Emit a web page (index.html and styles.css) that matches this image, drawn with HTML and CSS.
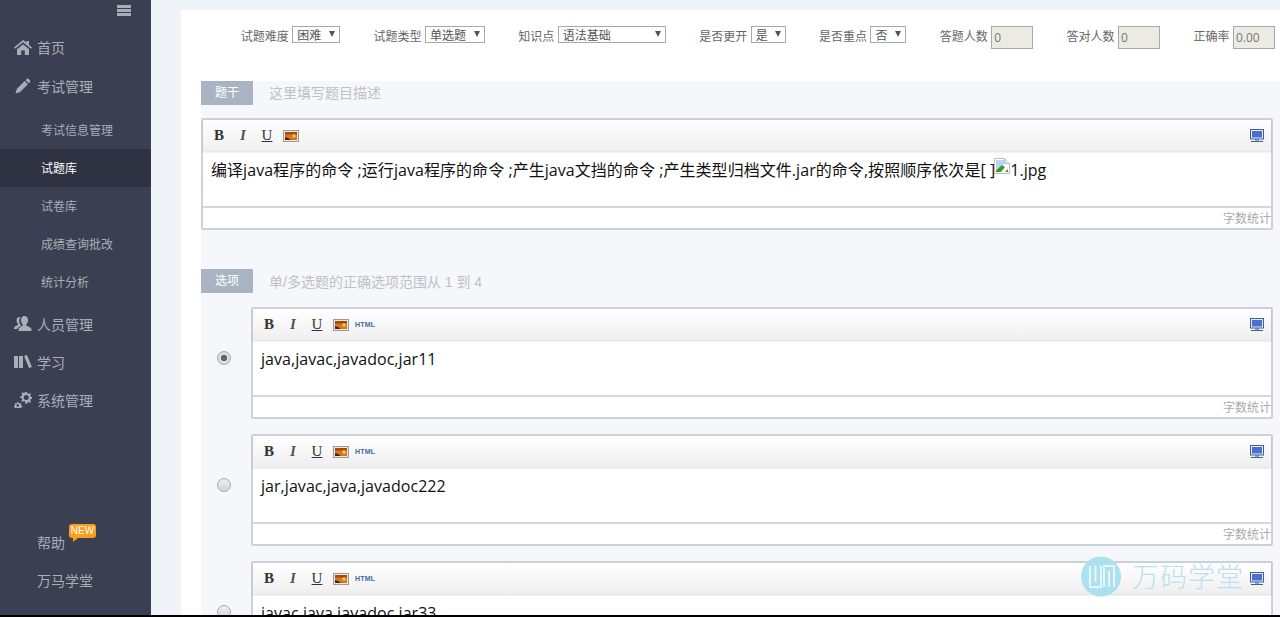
FILE: index.html
```html
<!DOCTYPE html>
<html lang="zh-CN">
<head>
  <meta charset="UTF-8">
  <title>试题库</title>
  <link rel="stylesheet" href="styles.css">
</head>
<body>
  <div class="app">
    <aside class="sidebar">
      <div class="toggle"><span></span><span></span><span></span></div>
      <nav class="nav">
        <a class="nav-item">
          <svg class="nav-icon" viewBox="0 0 18 16"><path d="M9 1 0 8.600l1 1.200L9 3.200l8 6.600 1-1.200-3-2.500V2h-2.400v1.600z"/><path d="M3 10.200 9 5.200l6 5V16h-4.200v-4.400H7.200V16H3z"/></svg>
          首页
        </a>
        <a class="nav-item gap">
          <svg class="nav-icon" viewBox="0 0 18 18"><path d="M13.200 1.200c.7-.7 1.600-.7 2.200-.1l1.400 1.400c.6.6.6 1.500-.1 2.200l-1.300 1.300-3.500-3.500zM10.900 3.500l3.500 3.500-8.900 9L.5 17.500 2 12.400z"/></svg>
          考试管理
        </a>
        <div class="subnav">
          <a class="sub-item">考试信息管理</a>
          <a class="sub-item active">试题库</a>
          <a class="sub-item">试卷库</a>
          <a class="sub-item">成绩查询批改</a>
          <a class="sub-item">统计分析</a>
        </div>
        <a class="nav-item">
          <svg class="nav-icon" viewBox="0 0 18 16"><path d="M10.500 0c2.300 0 3.600 1.700 3.600 4 0 1.800-.8 3.400-1.800 4.400v1.300c1.800.7 5.200 1.800 5.200 3.500V15H4.500v-1.800c0-1.700 2.500-2.800 4.200-3.500V8.400C7.700 7.400 7 5.800 7 4c0-2.300 1.200-4 3.500-4z"/><path d="M5.500 1c-1.900 0-3 1.400-3 3.300 0 1.500.6 2.800 1.500 3.600v1.100C2.600 9.600 0 10.400 0 11.900V13h3.200c.5-1.300 2-2.200 3.600-2.900V9C5.600 7.800 5 5.900 5.300 3.900 5.500 2.800 5.800 1.800 6.500 1.100z"/></svg>
          人员管理
        </a>
        <a class="nav-item">
          <svg class="nav-icon" viewBox="0 0 18 14"><path d="M0 1h4v12H0zM5 1h4v12H5zM10 1l3-1 5 12-3 1z"/></svg>
          学习
        </a>
        <a class="nav-item">
          <svg class="nav-icon" viewBox="0 0 18 16"><path fill-rule="evenodd" d="M11.300 0h1.800l.3 1.400 1.200.5 1.200-.8 1.200 1.200-.8 1.200.5 1.200 1.400.3v1.800l-1.400.3-.5 1.200.8 1.200-1.200 1.200-1.200-.8-1.200.5-.3 1.400h-1.800L11 9.600 9.800 9.100l-1.200.8-1.200-1.200.8-1.200-.5-1.200-1.400-.3V4.200l1.400-.3.5-1.200-.8-1.200L8.600.3l1.200.8L11 .6zM12.200 3a2.500 2.500 0 1 0 0 5 2.500 2.500 0 0 0 0-5z"/><path fill-rule="evenodd" d="M3 10h1.500l.2 1 .9.400.9-.5.9.9-.5.9.4.9 1 .2v1.300l-1 .2-.2.700H1l-.2-.7-1-.2v-1.300l1-.2.400-.9-.5-.9.9-.9.9.5.9-.4zM3.700 12.200a1.300 1.300 0 1 0 0 2.600 1.300 1.300 0 0 0 0-2.600z"/></svg>
          系统管理
        </a>
      </nav>
      <div class="nav-bottom">
        <a class="nav-item plain">帮助<span class="badge">NEW</span></a>
        <a class="nav-item plain">万马学堂</a>
      </div>
    </aside>

    <main class="main">
      <div class="panel">
        <form class="filters">
          <label class="field">试题难度<span class="select w48">困难</span></label>
          <label class="field">试题类型<span class="select w60">单选题</span></label>
          <label class="field">知识点<span class="select w108">语法基础</span></label>
          <label class="field">是否更开<span class="select w35">是</span></label>
          <label class="field">是否重点<span class="select w36">否</span></label>
          <label class="field">答题人数<span class="readonly">0</span></label>
          <label class="field">答对人数<span class="readonly">0</span></label>
          <label class="field">正确率<span class="readonly">0.00</span></label>
        </form>

        <section class="body">
          <div class="heading"><span class="tag">题干</span><span class="hint">这里填写题目描述</span></div>
          <div class="editor">
            <div class="toolbar">
              <span class="tool bold">B</span><span class="tool italic">I</span><span class="tool under">U</span>
              <span class="tool"><svg class="pic" viewBox="0 0 16 12"><rect x=".5" y=".5" width="15" height="11" fill="#e8e8e8" stroke="#999"/><rect x="2" y="2" width="12" height="8" fill="#d9751c"/><rect x="2" y="2" width="12" height="2.500" fill="#a8480f"/><circle cx="11" cy="6" r="1.800" fill="#f7c54b"/><path d="M2 10V7l3 1 3 2z" fill="#3c2a18"/></svg></span>
              <svg class="monitor" viewBox="0 0 14 13"><rect x=".5" y=".5" width="13" height="9.500" fill="#e6ecf6" stroke="#3d5f94"/><rect x="2" y="2" width="10" height="6.500" fill="#4a6fd0"/><path d="M5 10.500h4v1H5zM1 12h12v1H1z" fill="#3d5f94"/></svg>
            </div>
            <div class="content">编译java程序的命令 ;运行java程序的命令 ;产生java文挡的命令 ;产生类型归档文件.jar的命令,按照顺序依次是[ ]<svg class="broken" viewBox="0 0 16 16"><path d="M.5.500h10l5 5v10H.5z" fill="#fff" stroke="#b8c0cc"/><path d="M10.500.500v5h5" fill="#e4e9f0" stroke="#b8c0cc"/><path d="M2 2h8v4l-8 5z" fill="#bcd2f2"/><path d="M2 14v-2l6-5 3 2-4 5z" fill="#3f9a2c"/><path d="M11 14l3-3v3z" fill="#3f9a2c"/></svg>1.jpg</div>
            <div class="status">字数统计</div>
          </div>

          <div class="heading second"><span class="tag">选项</span><span class="hint">单/多选题的正确选项范围从 1 到 4</span></div>

          <div class="option">
            <span class="radio checked"></span>
            <div class="editor">
              <div class="toolbar">
                <span class="tool bold">B</span><span class="tool italic">I</span><span class="tool under">U</span>
                <span class="tool"><svg class="pic" viewBox="0 0 16 12"><rect x=".5" y=".5" width="15" height="11" fill="#e8e8e8" stroke="#999"/><rect x="2" y="2" width="12" height="8" fill="#d9751c"/><rect x="2" y="2" width="12" height="2.500" fill="#a8480f"/><circle cx="11" cy="6" r="1.800" fill="#f7c54b"/><path d="M2 10V7l3 1 3 2z" fill="#3c2a18"/></svg></span>
                <span class="html">HTML</span>
                <svg class="monitor" viewBox="0 0 14 13"><rect x=".5" y=".5" width="13" height="9.500" fill="#e6ecf6" stroke="#3d5f94"/><rect x="2" y="2" width="10" height="6.500" fill="#4a6fd0"/><path d="M5 10.500h4v1H5zM1 12h12v1H1z" fill="#3d5f94"/></svg>
              </div>
              <div class="content">java,javac,javadoc,jar11</div>
              <div class="status">字数统计</div>
            </div>
          </div>

          <div class="option">
            <span class="radio"></span>
            <div class="editor">
              <div class="toolbar">
                <span class="tool bold">B</span><span class="tool italic">I</span><span class="tool under">U</span>
                <span class="tool"><svg class="pic" viewBox="0 0 16 12"><rect x=".5" y=".5" width="15" height="11" fill="#e8e8e8" stroke="#999"/><rect x="2" y="2" width="12" height="8" fill="#d9751c"/><rect x="2" y="2" width="12" height="2.500" fill="#a8480f"/><circle cx="11" cy="6" r="1.800" fill="#f7c54b"/><path d="M2 10V7l3 1 3 2z" fill="#3c2a18"/></svg></span>
                <span class="html">HTML</span>
                <svg class="monitor" viewBox="0 0 14 13"><rect x=".5" y=".5" width="13" height="9.500" fill="#e6ecf6" stroke="#3d5f94"/><rect x="2" y="2" width="10" height="6.500" fill="#4a6fd0"/><path d="M5 10.500h4v1H5zM1 12h12v1H1z" fill="#3d5f94"/></svg>
              </div>
              <div class="content">jar,javac,java,javadoc222</div>
              <div class="status">字数统计</div>
            </div>
          </div>

          <div class="option">
            <span class="radio"></span>
            <div class="editor">
              <div class="toolbar">
                <span class="tool bold">B</span><span class="tool italic">I</span><span class="tool under">U</span>
                <span class="tool"><svg class="pic" viewBox="0 0 16 12"><rect x=".5" y=".5" width="15" height="11" fill="#e8e8e8" stroke="#999"/><rect x="2" y="2" width="12" height="8" fill="#d9751c"/><rect x="2" y="2" width="12" height="2.500" fill="#a8480f"/><circle cx="11" cy="6" r="1.800" fill="#f7c54b"/><path d="M2 10V7l3 1 3 2z" fill="#3c2a18"/></svg></span>
                <span class="html">HTML</span>
                <svg class="monitor" viewBox="0 0 14 13"><rect x=".5" y=".5" width="13" height="9.500" fill="#e6ecf6" stroke="#3d5f94"/><rect x="2" y="2" width="10" height="6.500" fill="#4a6fd0"/><path d="M5 10.500h4v1H5zM1 12h12v1H1z" fill="#3d5f94"/></svg>
              </div>
              <div class="content">javac,java,javadoc,jar33</div>
              <div class="status">字数统计</div>
            </div>
          </div>
        </section>
      </div>
    </main>

    <div class="watermark">
      <svg class="wm-logo" viewBox="0 0 40 41"><circle cx="20" cy="20.500" r="20" fill="#a9e0f0"/><path d="M9 10v21h11V10M14.500 10v16M23 31V10h10v21M28 15v16" fill="none" stroke="#e6f6fb" stroke-width="2"/></svg>
      <span class="wm-text">万码学堂</span>
    </div>
  </div>
</body>
</html>
```

FILE: styles.css
```css
* { box-sizing: border-box; margin: 0; padding: 0; }

html, body {
  height: 617px;
  overflow: hidden;
}

body {
  background: #000;
  font-family: "Open Sans", "Noto Sans CJK SC", sans-serif;
  font-size: 12px;
  color: #333;
}

.app {
  position: relative;
  display: flex;
  height: 615px;
  overflow: hidden;
  background: #f0f3f8;
}

/* 左侧导航 */
.sidebar {
  flex: 0 0 151px;
  display: flex;
  flex-direction: column;
  background: #3a3f51;
  color: #abaeb7;
}

.toggle {
  display: flex;
  flex-direction: column;
  gap: 1px;
  width: 14px;
  height: 28px;
  margin-left: 117px;
  padding-top: 5px;
}
.toggle span {
  display: block;
  height: 3px;
  background: #a9acb5;
}

.nav-item {
  display: flex;
  align-items: center;
  height: 38px;
  padding-left: 37px;
  position: relative;
  font-size: 14px;
}
.nav-item.gap { margin-top: 1px; }
.nav-icon {
  position: absolute;
  left: 14px;
  top: 11px;
  width: 18px;
  height: 16px;
  fill: #abaeb7;
}

.subnav { padding: 6px 0 4px; }
.sub-item {
  display: flex;
  align-items: center;
  height: 38px;
  padding-left: 41px;
  font-size: 12px;
}
.sub-item.active {
  background: #2f3241;
  color: #fff;
}

.nav-bottom {
  margin-top: auto;
  padding-bottom: 16px;
}

.badge {
  position: absolute;
  left: 69px;
  top: 1px;
  width: 27px;
  height: 14px;
  border-radius: 3px;
  background: #fb9e1c;
  color: #fff;
  font-family: "Liberation Sans", sans-serif;
  font-size: 10px;
  line-height: 14px;
  text-align: center;
}
.badge::after {
  content: "";
  position: absolute;
  left: 4px;
  top: 14px;
  border-top: 4px solid #fb9e1c;
  border-right: 5px solid transparent;
}

/* 主体 */
.main {
  flex: 1;
  padding: 10px 0 0 30px;
}
.panel {
  height: 100%;
  background: #fff;
}

.filters {
  display: flex;
  align-items: flex-start;
  gap: 33.300px;
  height: 71px;
  padding: 16px 0 0 59.700px;
}
.field {
  display: flex;
  align-items: flex-start;
  gap: 3.500px;
  line-height: 21px;
  color: #666;
  white-space: nowrap;
}
.select {
  position: relative;
  display: block;
  height: 17px;
  padding-left: 4px;
  border: 1px solid #a9a9a9;
  background: #fff;
  line-height: 17px;
  color: #555;
}
.select::after {
  content: "";
  position: absolute;
  right: 4px;
  top: 4px;
  border-top: 6px solid #555;
  border-left: 3px solid transparent;
  border-right: 3px solid transparent;
}
.w48 { width: 48px; }
.w60 { width: 60px; }
.w108 { width: 108px; }
.w35 { width: 35px; }
.w36 { width: 36px; }

.readonly {
  display: block;
  width: 42px;
  height: 23px;
  padding-left: 2px;
  border: 1px solid #a9a9a9;
  background: #ebebe4;
  line-height: 21px;
  color: #777;
}

.body {
  height: 100%;
  margin-left: 20px;
  background: #f5f7fb;
}

.heading {
  display: flex;
  align-items: center;
  height: 24px;
}
.heading.second { margin-top: 39px; }
.tag {
  width: 52px;
  height: 24px;
  background: #a9b4c2;
  color: #fff;
  line-height: 24px;
  text-align: center;
}
.hint {
  margin-left: 16px;
  margin-top: -3px;
  font-family: "Liberation Sans", "Noto Sans CJK SC", sans-serif;
  font-size: 14px;
  color: #bcc1c9;
}
.heading.second .hint { margin-top: -1px; }

/* 编辑器 */
.editor {
  width: 1072px;
  height: 112px;
  margin-top: 13px;
  border: 2px solid #cbd2dc;
  border-radius: 2px;
  background: #fff;
}
.toolbar {
  display: flex;
  align-items: center;
  height: 31px;
  padding-left: 4px;
  background: linear-gradient(#fff, #efefef);
  box-shadow: 0 1px 2px rgba(0,0,0,.15);
  position: relative;
}
.tool {
  display: flex;
  align-items: center;
  justify-content: center;
  width: 24px;
  height: 20px;
  font-family: "Liberation Serif", serif;
  font-size: 15px;
  color: #444;
}
.bold { font-weight: bold; color: #333; }
.italic { font-style: italic; font-weight: bold; color: #555; }
.under { text-decoration: underline; color: #333; }
.pic { width: 16px; height: 12px; }
.html {
  margin-left: 2px;
  font-family: "Liberation Sans", sans-serif;
  font-size: 7px;
  letter-spacing: .2px;
  font-weight: bold;
  color: #3d6b9c;
}
.monitor {
  width: 14px;
  height: 13px;
  margin-left: auto;
  margin-right: 7px;
}

.content {
  height: 57px;
  padding: 7px 8px;
  border-bottom: 2px solid #d4d8de;
  font-size: 16px;
  letter-spacing: .05px;
  line-height: 24px;
  color: #111;
  white-space: nowrap;
  overflow: hidden;
}
.broken {
  width: 16px;
  height: 16px;
  margin-left: -1px;
  vertical-align: 2px;
}

.status {
  height: 20px;
  color: #aaa;
  line-height: 21px;
  text-align: right;
}

.option {
  display: flex;
  align-items: center;
  height: 112px;
  margin-top: 15px;
  padding-left: 16px;
}
.heading + .option { margin-top: 14px; }
.option .editor {
  width: 1022px;
  margin: 0 0 0 20px;
  flex: none;
}
.radio {
  flex: none;
  width: 14px;
  height: 14px;
  margin-top: -10px;
  border: 1px solid #a9a9a9;
  border-radius: 50%;
  background: linear-gradient(#eee, #d4d4d4);
}
.radio.checked {
  background: radial-gradient(circle, #666 0 3px, #ddd 3.500px);
}

/* 水印 */
.watermark {
  position: absolute;
  left: 1081px;
  top: 556px;
  display: flex;
  align-items: center;
  gap: 11px;
  opacity: .95;
}
.wm-logo { width: 40px; height: 41px; }
.wm-text {
  font-size: 27px;
  font-weight: 300;
  letter-spacing: 1px;
  line-height: 41px;
  color: #b7e1ee;
}
```
